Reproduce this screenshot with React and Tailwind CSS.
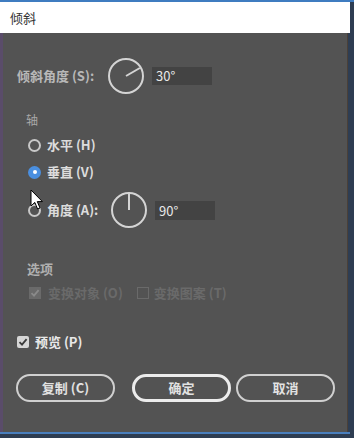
import React from "react";

const cjk = { fontFamily: '"Noto Sans CJK SC", "Liberation Sans", sans-serif' };

function Dial({ angle }) {
  // angle in degrees, 0 = pointing right, counter-clockwise
  const rad = (angle * Math.PI) / 180;
  const x2 = 19 + Math.cos(rad) * 16;
  const y2 = 19 - Math.sin(rad) * 16;
  return (
    <svg width="38" height="38" viewBox="0 0 38 38" className="shrink-0">
      <circle cx="19" cy="19" r="17" fill="none" stroke="#d4d4d4" strokeWidth="2" />
      <line x1="19" y1="19" x2={x2} y2={y2} stroke="#d4d4d4" strokeWidth="2" />
    </svg>
  );
}

function Radio({ checked }) {
  if (checked) {
    return (
      <span className="w-[13px] h-[13px] rounded-full bg-[#4a8fe0] flex items-center justify-center shrink-0">
        <span className="w-[4px] h-[4px] rounded-full bg-white" />
      </span>
    );
  }
  return <span className="w-[13px] h-[13px] rounded-full border-2 border-[#c8c8c8] shrink-0" />;
}

function Check({ color = "#3a3a3a" }) {
  return (
    <svg width="10" height="10" viewBox="0 0 10 10">
      <path d="M1.5 5.2 L4 7.6 L8.6 2.2" fill="none" stroke={color} strokeWidth="1.8" />
    </svg>
  );
}

function Cursor() {
  return (
    <svg width="14" height="22" viewBox="0 0 14 22" className="absolute left-[30px] top-[189px]">
      <path
        d="M1 1 L1 17 L4.8 13.4 L7.6 20 L10 19 L7.3 12.6 L12.4 12.6 Z"
        fill="#ffffff"
        stroke="#000000"
        strokeWidth="1"
        strokeLinejoin="round"
      />
    </svg>
  );
}

function Pill({ children, strong }) {
  return (
    <button
      className={
        "w-[99px] h-[28px] rounded-full flex items-center justify-center text-[13px] font-bold text-[#e2e2e2] shrink-0 " +
        (strong ? "border-[3px] border-[#ececec]" : "border-2 border-[#d0d0d0]")
      }
    >
      {children}
    </button>
  );
}

export default function App() {
  return (
    <div className="w-[354px] h-[438px] bg-[#2e3d52] relative overflow-hidden" style={cjk}>
      <div className="h-[2px] bg-[#3f7cc0]" />
      <div className="w-[350px] h-[31px] bg-white flex items-center pl-[10px] text-[13px] text-[#333]">
        倾斜
      </div>

      <div className="w-[348px] h-[399px] bg-[#535353] border-l-[3px] border-l-[#5a4c6a] border-r border-r-[#4a4038] flex flex-col">
        <div className="mt-[24px] h-[38px] flex items-center pl-[14px]">
          <span className="text-[13px] font-bold text-[#b8b8b8] w-[90px]">倾斜角度 (S):</span>
          <Dial angle={30} />
          <div className="ml-[7px] w-[60px] h-[18px] bg-[#434343] text-[#e8e8e8] text-[13px] leading-[18px] pl-[4px]">
            30°
          </div>
        </div>

        <div className="mt-[17px] h-[16px] pl-[23px] text-[12px] leading-[16px] text-[#a8a8a8]">轴</div>

        <div className="mt-[9px] h-[16px] pl-[25px] flex items-center gap-[6px]">
          <Radio />
          <span className="text-[13px] font-bold text-[#dcdcdc]">水平 (H)</span>
        </div>

        <div className="mt-[11px] h-[16px] pl-[25px] flex items-center gap-[6px]">
          <Radio checked />
          <span className="text-[13px] font-bold text-[#dcdcdc]">垂直 (V)</span>
        </div>

        <div className="mt-[11px] h-[38px] pl-[25px] flex items-center">
          <Radio />
          <span className="ml-[6px] w-[63px] text-[13px] font-bold text-[#dcdcdc]">角度 (A):</span>
          <Dial angle={90} />
          <div className="ml-[7px] w-[60px] h-[19px] bg-[#434343] text-[#e8e8e8] text-[13px] leading-[19px] pl-[4px]">
            90°
          </div>
        </div>

        <div className="mt-[32px] h-[16px] pl-[24px] text-[13px] leading-[16px] font-bold text-[#b0b0b0]">选项</div>

        <div className="mt-[8px] h-[16px] pl-[26px] flex items-center text-[13px] font-bold text-[#6a6a6a]">
          <span className="w-[12px] h-[12px] bg-[#6a6a6a] flex items-center justify-center">
            <Check color="#8a8a8a" />
          </span>
          <span className="ml-[7px]">变换对象 (O)</span>
          <span className="ml-[14px] w-[12px] h-[12px] border border-[#6a6a6a]" />
          <span className="ml-[5px]">变换图案 (T)</span>
        </div>

        <div className="mt-[33px] h-[16px] pl-[14px] flex items-center">
          <span className="w-[12px] h-[12px] bg-[#d6d6d6] rounded-[2px] flex items-center justify-center">
            <Check />
          </span>
          <span className="ml-[6px] text-[13px] font-bold text-[#e8e8e8]">预览 (P)</span>
        </div>

        <div className="mt-[24px] pl-[13px] flex">
          <Pill>复制 (C)</Pill>
          <div className="ml-[17px]">
            <Pill strong>确定</Pill>
          </div>
          <div className="ml-[5px]">
            <Pill>取消</Pill>
          </div>
        </div>
      </div>

      <div className="w-[350px] h-[2px] bg-[#4a7fbd]" />
      <Cursor />
    </div>
  );
}
